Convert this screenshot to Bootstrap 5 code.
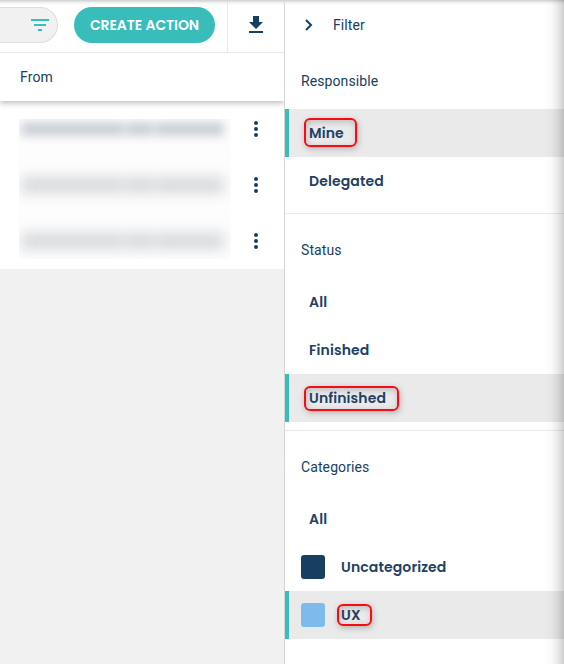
<!DOCTYPE html>
<html lang="en">
<head>
<meta charset="utf-8">
<meta name="viewport" content="width=device-width, initial-scale=1">
<title>Actions</title>
<link rel="stylesheet" href="https://cdn.jsdelivr.net/npm/bootstrap@5.3.0/dist/css/bootstrap.min.css">
<style>
  :root { --navy: #163f61; --teal: #38bdbb; }
  body { font-family: Roboto, "Liberation Sans", sans-serif; font-size: 14px; line-height: 20px; color: var(--navy); background: #f1f1f1; }
  .app { height: 664px; }
  .app::before { content: ""; position: absolute; inset: 0 0 auto; height: 5px; z-index: 5; background: linear-gradient(#d6d6d6 0 1px, #e4e4e4aa 2px, #f4f4f400); }
  .app::after { content: ""; position: absolute; inset: 0 0 0 auto; width: 20px; z-index: 5; background: linear-gradient(to right, #0000, #00000005 35%, #00000013 65%, #00000030); }
  .main-pane { width: 284px; }
  .toolbar { height: 53px; border-bottom: 1px solid #e9e9e9; }
  .search-end { width: 58px; height: 36px; margin-top: 7px; background: #f1f1f1; border: 1px solid #dcdcdc; border-left: 0; border-radius: 0 18px 18px 0; padding-right: 8px; }
  .btn-create { --bs-btn-color: #fff; --bs-btn-bg: var(--teal); --bs-btn-hover-color: #fff; --bs-btn-hover-bg: #2fa9a7; width: 141px; height: 36px; margin: 7px 0 0 16px; border: 0; font: 600 14px/20px Poppins, Inter, sans-serif; letter-spacing: -.07px; }
  .download { width: 57px; border-left: 1px solid #e9e9e9; }
  .download-icon { margin-top: -3px; }
  .column-head { height: 48px; padding-left: 20px; box-shadow: 0 2px 6px #00000045; z-index: 1; clip-path: inset(0 0 -12px 0); letter-spacing: .15px; }
  .rows { height: 168px; }
  .redacted { width: 212px; height: 140px; margin: 18px 0 0 19px; background: #fdfdfd; }
  .redacted-line { height: 56px; padding: 3px 7px 0 2px; gap: 2px; filter: blur(5px); }
  .redacted-line + .redacted-line { padding-top: 2px; filter: blur(7px); }
  .redacted-line i { height: 14px; background: #cbd0d6; }
  .redacted-line + .redacted-line i { height: 16px; background: #d4d7da; }
  .redacted-line i:nth-child(1) { width: 103px; }
  .redacted-line i:nth-child(2) { width: 27px; }
  .redacted-line i:nth-child(3) { width: 69px; }
  .row-menu { width: 24px; height: 56px; margin-right: 16px; }
  .filter-pane { border-left: 1px solid #d5d5d5; }
  .filter-head { height: 45px; padding: 5px 0 0 16px; gap: 20px; letter-spacing: .1px; }
  .filter-group { padding: 8px 0; }
  .filter-group + .filter-group { border-top: 1px solid #e9e9e9; }
  .group-title { height: 56px; padding-left: 16px; letter-spacing: .1px; }
  .choice { height: 48px; padding-left: 20px; border-left: 4px solid transparent; font: 600 14px/20px Poppins, Inter, sans-serif; letter-spacing: .12px; color: #214164; }
  .choice.with-swatch { padding-left: 12px; gap: 16px; }
  .choice.selected { background: #eaeaea; border-left-color: var(--teal); }
  .swatch { width: 24px; height: 24px; border-radius: 3px; background: var(--navy); }
  .swatch-sky { background: #7ebbec; }
  .marker { position: absolute; border: 2px solid #f80b12; border-radius: 6px; box-shadow: 1px 2px 6px #0000003d, inset 1px 2px 6px #00000033; }
  .marker-mine { left: -5px; top: -5px; width: 53px; height: 29px; }
  .marker-unfinished { left: -5px; top: -2px; width: 95px; height: 25px; }
  .marker-ux { left: -4px; top: -1px; width: 35px; height: 22px; }
</style>
</head>
<body>
<div class="app d-flex position-relative overflow-hidden">
  <main class="main-pane flex-shrink-0">
    <div class="toolbar d-flex bg-white">
      <div class="search-end d-flex align-items-center justify-content-end">
        <svg width="18" height="12" viewBox="0 0 18 12" fill="#38bdbb"><path d="M0 0h18v2H0zM3 5h12v2H3zM7 10h4v2H7z"/></svg>
      </div>
      <button class="btn btn-create rounded-pill p-0" type="button"><span class="create-label">CREATE ACTION</span></button>
      <div class="download ms-auto d-flex align-items-center justify-content-center">
        <svg class="download-icon" width="14" height="17" viewBox="0 0 14 17" fill="#163f61"><path d="M4 0h6v6h4l-7 7-7-7h4zM0 15h14v2H0z"/></svg>
      </div>
    </div>
    <div class="column-head d-flex align-items-center bg-white position-relative">From</div>
    <div class="rows d-flex justify-content-between bg-white">
      <div class="redacted overflow-hidden">
        <div class="redacted-line d-flex"><i></i><i></i><i></i></div>
        <div class="redacted-line d-flex"><i></i><i></i><i></i></div>
        <div class="redacted-line d-flex"><i></i><i></i><i></i></div>
      </div>
      <div>
        <div class="row-menu d-flex align-items-center justify-content-center"><svg width="4" height="16" fill="#163f61"><circle cx="2" cy="2" r="2"/><circle cx="2" cy="8" r="2"/><circle cx="2" cy="14" r="2"/></svg></div>
        <div class="row-menu d-flex align-items-center justify-content-center"><svg width="4" height="16" fill="#163f61"><circle cx="2" cy="2" r="2"/><circle cx="2" cy="8" r="2"/><circle cx="2" cy="14" r="2"/></svg></div>
        <div class="row-menu d-flex align-items-center justify-content-center"><svg width="4" height="16" fill="#163f61"><circle cx="2" cy="2" r="2"/><circle cx="2" cy="8" r="2"/><circle cx="2" cy="14" r="2"/></svg></div>
      </div>
    </div>
  </main>
  <aside class="filter-pane flex-grow-1 bg-white">
    <div class="filter-head d-flex align-items-center">
      <svg class="ms-1" width="8" height="12" viewBox="0 0 8 12" fill="none" stroke="#163f61" stroke-width="2"><path d="m1 1 5 5-5 5"/></svg>
      <span class="filter-label">Filter</span>
    </div>
    <section class="filter-group">
      <div class="group-title d-flex align-items-center">Responsible</div>
      <div class="choice selected d-flex align-items-center"><span class="position-relative">Mine<span class="marker marker-mine"></span></span></div>
      <div class="choice d-flex align-items-center"><span>Delegated</span></div>
    </section>
    <section class="filter-group">
      <div class="group-title d-flex align-items-center">Status</div>
      <div class="choice d-flex align-items-center"><span>All</span></div>
      <div class="choice d-flex align-items-center"><span>Finished</span></div>
      <div class="choice selected d-flex align-items-center"><span class="position-relative">Unfinished<span class="marker marker-unfinished"></span></span></div>
    </section>
    <section class="filter-group">
      <div class="group-title d-flex align-items-center">Categories</div>
      <div class="choice d-flex align-items-center"><span>All</span></div>
      <div class="choice with-swatch d-flex align-items-center"><span class="swatch"></span><span>Uncategorized</span></div>
      <div class="choice with-swatch selected d-flex align-items-center"><span class="swatch swatch-sky"></span><span class="position-relative">UX<span class="marker marker-ux"></span></span></div>
    </section>
  </aside>
</div>
<script src="https://cdn.jsdelivr.net/npm/bootstrap@5.3.0/dist/js/bootstrap.bundle.min.js"></script>
</body>
</html>
